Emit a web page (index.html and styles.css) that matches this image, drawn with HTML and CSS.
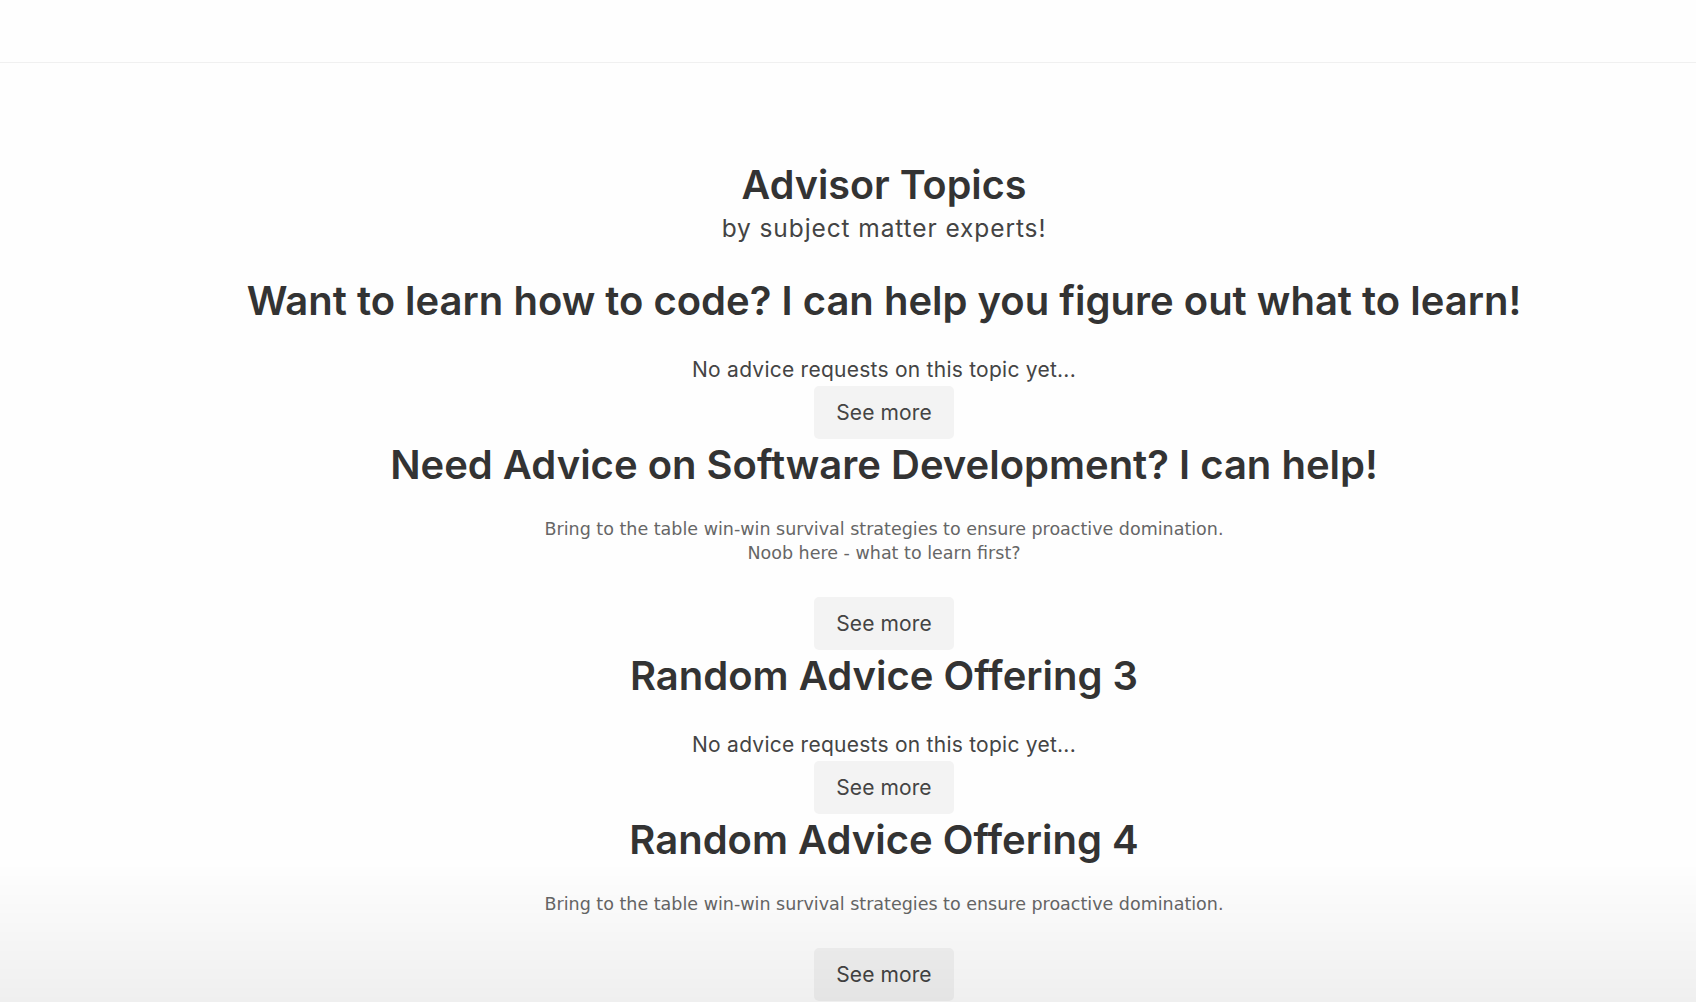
FILE: index.html
```html
<!DOCTYPE html>
<html lang="en">
<head>
<meta charset="utf-8">
<title>Advisor Topics</title>
<link rel="stylesheet" href="styles.css">
</head>
<body>
<header class="topbar"></header>
<main class="page">
  <h1 class="title">Advisor Topics</h1>
  <p class="subtitle">by subject matter experts!</p>

  <section class="topic">
    <h2 class="topic-title">Want to learn how to code? I can help you figure out what to learn!</h2>
    <p class="empty">No advice requests on this topic yet...</p>
    <button class="more">See more</button>
  </section>

  <section class="topic">
    <h2 class="topic-title">Need Advice on Software Development? I can help!</h2>
    <ul class="requests">
      <li>Bring to the table win-win survival strategies to ensure proactive domination.</li>
      <li>Noob here - what to learn first?</li>
    </ul>
    <button class="more">See more</button>
  </section>

  <section class="topic">
    <h2 class="topic-title">Random Advice Offering 3</h2>
    <p class="empty">No advice requests on this topic yet...</p>
    <button class="more">See more</button>
  </section>

  <section class="topic">
    <h2 class="topic-title">Random Advice Offering 4</h2>
    <ul class="requests">
      <li>Bring to the table win-win survival strategies to ensure proactive domination.</li>
    </ul>
    <button class="more">See more</button>
  </section>
</main>
<div class="fade"></div>
</body>
</html>
```
FILE: styles.css
```css
* { box-sizing: border-box; }
html, body { margin: 0; padding: 0; background: #fefefe; }
body {
  font-family: Inter, "Noto Sans", sans-serif;
  color: #333;
}
.topbar {
  height: 63px;
  border-bottom: 1px solid #f0f0f0;
  background: #fefefe;
}
.page {
  display: flex;
  flex-direction: column;
  align-items: center;
  text-align: center;
  padding-top: 98px;
  padding-left: 72px;
}
.title {
  margin: 0;
  font-size: 39.5px;
  line-height: 48px;
  font-weight: 600;
  color: #333;
}
.subtitle {
  margin: 4px 0 0;
  font-size: 24.5px;
  line-height: 30px;
  letter-spacing: 0.9px;
  color: #444;
}
.topic {
  display: flex;
  flex-direction: column;
  align-items: center;
}
.topic:first-of-type { margin-top: 33px; }
.topic + .topic { margin-top: 1px; }
.topic-title {
  margin: 0;
  font-size: 40px;
  line-height: 50px;
  font-weight: 600;
  color: #333;
}
.empty {
  margin: 30px 0 2px;
  font-size: 21px;
  line-height: 28px;
  letter-spacing: 0.25px;
  color: #444;
}
.requests {
  list-style: none;
  margin: 27px 0 32px;
  padding: 0;
  font-family: "DejaVu Sans", Verdana, sans-serif;
  font-size: 17.5px;
  line-height: 24px;
  color: #666;
}
.more {
  border: none;
  border-radius: 5px;
  background: #f3f3f3;
  color: #444;
  font-family: Inter, "Noto Sans", sans-serif;
  font-size: 21px;
  line-height: 25px;
  letter-spacing: 0.1px;
  padding: 14px 22px;
  height: 53px;
  cursor: pointer;
}
.fade {
  position: fixed;
  left: 0;
  right: 0;
  bottom: 0;
  height: 140px;
  background: linear-gradient(to bottom, rgba(0,0,0,0), rgba(0,0,0,0.06));
  pointer-events: none;
}
```
